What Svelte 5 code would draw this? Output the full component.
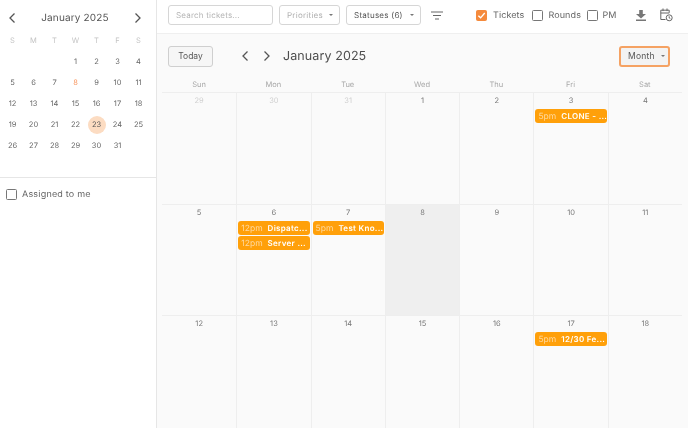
<script>
  const dows = ['Sun', 'Mon', 'Tue', 'Wed', 'Thu', 'Fri', 'Sat'];
  const mini = [
    ['', '', '', 1, 2, 3, 4],
    [5, 6, 7, 8, 9, 10, 11],
    [12, 13, 14, 15, 16, 17, 18],
    [19, 20, 21, 22, 23, 24, 25],
    [26, 27, 28, 29, 30, 31, '']
  ];
  const weeks = [
    [
      { n: 29, off: true }, { n: 30, off: true }, { n: 31, off: true }, { n: 1 }, { n: 2 },
      { n: 3, ev: [['5pm', 'CLONE - ...']] }, { n: 4 }
    ],
    [
      { n: 5 },
      { n: 6, ev: [['12pm', 'Dispatc...'], ['12pm', 'Server ...']] },
      { n: 7, ev: [['5pm', 'Test Kno...']] },
      { n: 8, today: true }, { n: 9 }, { n: 10 }, { n: 11 }
    ],
    [
      { n: 12 }, { n: 13 }, { n: 14 }, { n: 15 }, { n: 16 },
      { n: 17, ev: [['5pm', '12/30 Fe...']] }, { n: 18 }
    ]
  ];
</script>

<div class="app">
  <aside class="side">
    <div class="mini">
      <div class="mini-head">
        <svg class="chev" width="10" height="12" viewBox="0 0 10 12"><path d="M7.5 1.5 3 6l4.5 4.5" /></svg>
        <span class="mini-title">January 2025</span>
        <svg class="chev" width="10" height="12" viewBox="0 0 10 12"><path d="M2.5 1.5 7 6l-4.5 4.5" /></svg>
      </div>
      <div class="mini-grid">
        {#each ['S', 'M', 'T', 'W', 'T', 'F', 'S'] as d}
          <span class="mini-dow">{d}</span>
        {/each}
        {#each mini as w}
          {#each w as d}
            <span class="mini-day" class:mark={d === 8} class:sel={d === 23}>{d}</span>
          {/each}
        {/each}
      </div>
    </div>
    <label class="assigned"><span class="box"></span>Assigned to me</label>
  </aside>

  <main class="main">
    <header class="toolbar">
      <div class="search">Search tickets...</div>
      <div class="select muted">Priorities<i class="caret"></i></div>
      <div class="select statuses">Statuses (6)<i class="caret"></i></div>
      <svg class="filter" width="12" height="9" viewBox="0 0 12 9"><path d="M0 1h12M2 4.5h8M4 8h4" /></svg>
      <div class="checks">
        <label class="check"><span class="box on"><svg width="9" height="9" viewBox="0 0 10 10"><path d="M1.5 5.2 4 7.6 8.6 2.2" /></svg></span>Tickets</label>
        <label class="check"><span class="box"></span>Rounds</label>
        <label class="check"><span class="box"></span>PM</label>
      </div>
      <svg class="dl" width="10" height="11" viewBox="0 0 10 11"><path d="M3.2 0h3.6v4H10L5 8.6 0 4h3.2zM0 9.6h10V11H0z" /></svg>
      <svg class="sched" width="13" height="14" viewBox="0 0 13 14">
        <path d="M5.5 11.5H.8V2.2h8.4v2.6M.8 5h8.4M3 .5v2.6M7 .5v2.6" />
        <circle cx="9.2" cy="9.8" r="3" />
        <path d="M9.2 8.3v1.6l1.1.6" />
      </svg>
    </header>

    <section class="cal">
      <div class="cal-bar">
        <button class="today">Today</button>
        <svg class="nav first" width="10" height="12" viewBox="0 0 10 12"><path d="M7.5 1.5 3 6l4.5 4.5" /></svg>
        <svg class="nav" width="10" height="12" viewBox="0 0 10 12"><path d="M2.5 1.5 7 6l-4.5 4.5" /></svg>
        <h1>January 2025</h1>
        <button class="view">Month<i class="caret"></i></button>
      </div>
      <div class="dows">
        {#each dows as d}<span>{d}</span>{/each}
      </div>
      <div class="weeks">
        {#each weeks as w}
          <div class="week">
            {#each w as c}
              <div class="cell" class:now={c.today}>
                <span class="num" class:off={c.off}>{c.n}</span>
                {#each c.ev ?? [] as e}
                  <div class="ev"><span class="t">{e[0]}</span><span class="name">{e[1]}</span></div>
                {/each}
              </div>
            {/each}
          </div>
        {/each}
      </div>
    </section>
  </main>
</div>

<style>
  :global(body) { margin: 0; }
  .app {
    width: 688px; height: 428px; display: flex; overflow: hidden;
    font-family: Inter, "Liberation Sans", sans-serif; color: #555; background: #fff;
    text-rendering: geometricPrecision;
    filter: blur(0.25px);
  }
  .side { width: 156px; flex: none; border-right: 1px solid #e6e6e6; }
  .mini { height: 177px; border-bottom: 1px solid #e6e6e6; }
  .mini-head { display: flex; align-items: center; justify-content: space-between; padding: 11px 13px 0 7px; height: 13px; }
  .mini-title { font-size: 10px; letter-spacing: .15px; color: #555; }
  .chev, .nav { fill: none; stroke: #555; stroke-width: 1.3; flex: none; }
  .mini-grid { display: grid; grid-template-columns: repeat(7, 21px); grid-auto-rows: 21px; padding: 6px 0 0 2px; }
  .mini-dow { font-size: 7.5px; color: #c4c4c4; display: flex; align-items: center; justify-content: center; }
  .mini-day { font-size: 7.5px; color: #666; display: flex; align-items: center; justify-content: center; }
  .mark { color: #f7935a; }
  .sel { background: #fcdcc2; border-radius: 50%; margin: 1.5px; color: #555; }
  .assigned { display: flex; align-items: center; gap: 5px; font-size: 9px; letter-spacing: .2px; color: #666; padding: 11px 0 0 6px; }
  .box { width: 9px; height: 9px; border: 1.2px solid #777; border-radius: 1.5px; display: inline-flex; align-items: center; justify-content: center; flex: none; }
  .box.on { background: #f58a3c; border-color: #f58a3c; }
  .box.on svg { fill: none; stroke: #fff; stroke-width: 1.5; }

  .main { flex: 1; min-width: 0; display: flex; flex-direction: column; }
  .toolbar { height: 34px; flex: none; display: flex; align-items: center; box-sizing: border-box; padding: 0 0 3px 11px; border-bottom: 1px solid #efefef; }
  .search { width: 96px; height: 18px; border: 1px solid #d6d6d6; border-radius: 3px; font-size: 8px; letter-spacing: .2px; color: #b5b5b5; display: flex; align-items: center; padding-left: 7px; flex: none; }
  .select { height: 18px; border: 1px solid #d6d6d6; border-radius: 3px; font-size: 8px; letter-spacing: .25px; color: #555; display: flex; align-items: center; padding-left: 7px; margin-left: 6px; flex: none; }
  .select.muted { color: #b0b0b0; width: 52px; }
  .statuses { width: 66px; }
  .caret { width: 0; height: 0; border-left: 2.5px solid transparent; border-right: 2.5px solid transparent; border-top: 2.5px solid #777; margin-left: auto; margin-right: 6px; }
  .filter { margin-left: 10px; fill: none; stroke: #666; stroke-width: 1; flex: none; }
  .checks { display: flex; align-items: center; margin-left: 33px; }
  .check { display: flex; align-items: center; gap: 5px; font-size: 9px; letter-spacing: .1px; color: #666; margin-right: 8px; }
  .check:first-child { gap: 6px; }
  .check:nth-child(2) { margin-right: 5.5px; }
  .check:last-child { margin-right: 0; }
  .dl { fill: #777; margin-left: 19px; flex: none; }
  .sched { margin-left: 14px; fill: none; stroke: #666; stroke-width: 1; flex: none; }

  .cal { flex: 1; background: #fafafa; padding: 0 6px 0 5px; display: flex; flex-direction: column; min-height: 0; }
  .cal-bar { height: 44px; display: flex; align-items: center; flex: none; padding-left: 6px; }
  .today { width: 45px; height: 21px; border: 1px solid #cfcfcf; border-radius: 3px; background: #f6f6f6; font: inherit; font-size: 8.5px; color: #555; padding: 0; flex: none; }
  .nav { margin-left: 11.5px; }
  .nav.first { margin-left: 27px; }
  h1 { font-size: 12.5px; font-weight: 400; letter-spacing: .1px; color: #4e4e4e; margin: 0 0 0 11.5px; }
  .view { margin-left: auto; margin-right: 12px; width: 51px; height: 21px; box-sizing: border-box; border: 2px solid #f5a263; border-radius: 3px; background: #f3f3f3; font: inherit; font-size: 8.5px; letter-spacing: .2px; color: #555; display: flex; align-items: center; padding: 0 0 0 7px; }
  .view .caret { margin-right: 3px; }
  .dows { display: grid; grid-template-columns: repeat(7, 1fr); height: 15px; box-sizing: border-box; flex: none; border-bottom: 1px solid #eeeeee; }
  .dows span { font-size: 7.5px; color: #a8a8a8; text-align: center; line-height: 13px; }
  .weeks { flex: 1; display: grid; grid-template-rows: repeat(3, 1fr); min-height: 0; }
  .week { display: grid; grid-template-columns: repeat(7, 1fr); border-bottom: 1px solid #eeeeee; min-height: 0; }
  .week:last-child { border-bottom: 0; }
  .cell { border-left: 1px solid #eeeeee; padding: 0 1px; min-width: 0; }
  .cell:first-child { border-left: 0; }
  .now { background: #efefef; }
  .num { display: block; font-size: 7.5px; color: #777; text-align: center; height: 16px; line-height: 16px; }
  .num.off { color: #cfcfcf; }
  .ev { height: 14px; margin-bottom: 1px; border-radius: 3px; background: #ffa00a; font-size: 8.5px; line-height: 14px; display: flex; align-items: baseline; padding: 0 2px 0 3px; white-space: nowrap; }
  .t { color: #ffd9a0; margin-right: 5px; flex: none; }
  .name { color: #fff; font-weight: 600; font-size: 8px; letter-spacing: .3px; }
</style>
